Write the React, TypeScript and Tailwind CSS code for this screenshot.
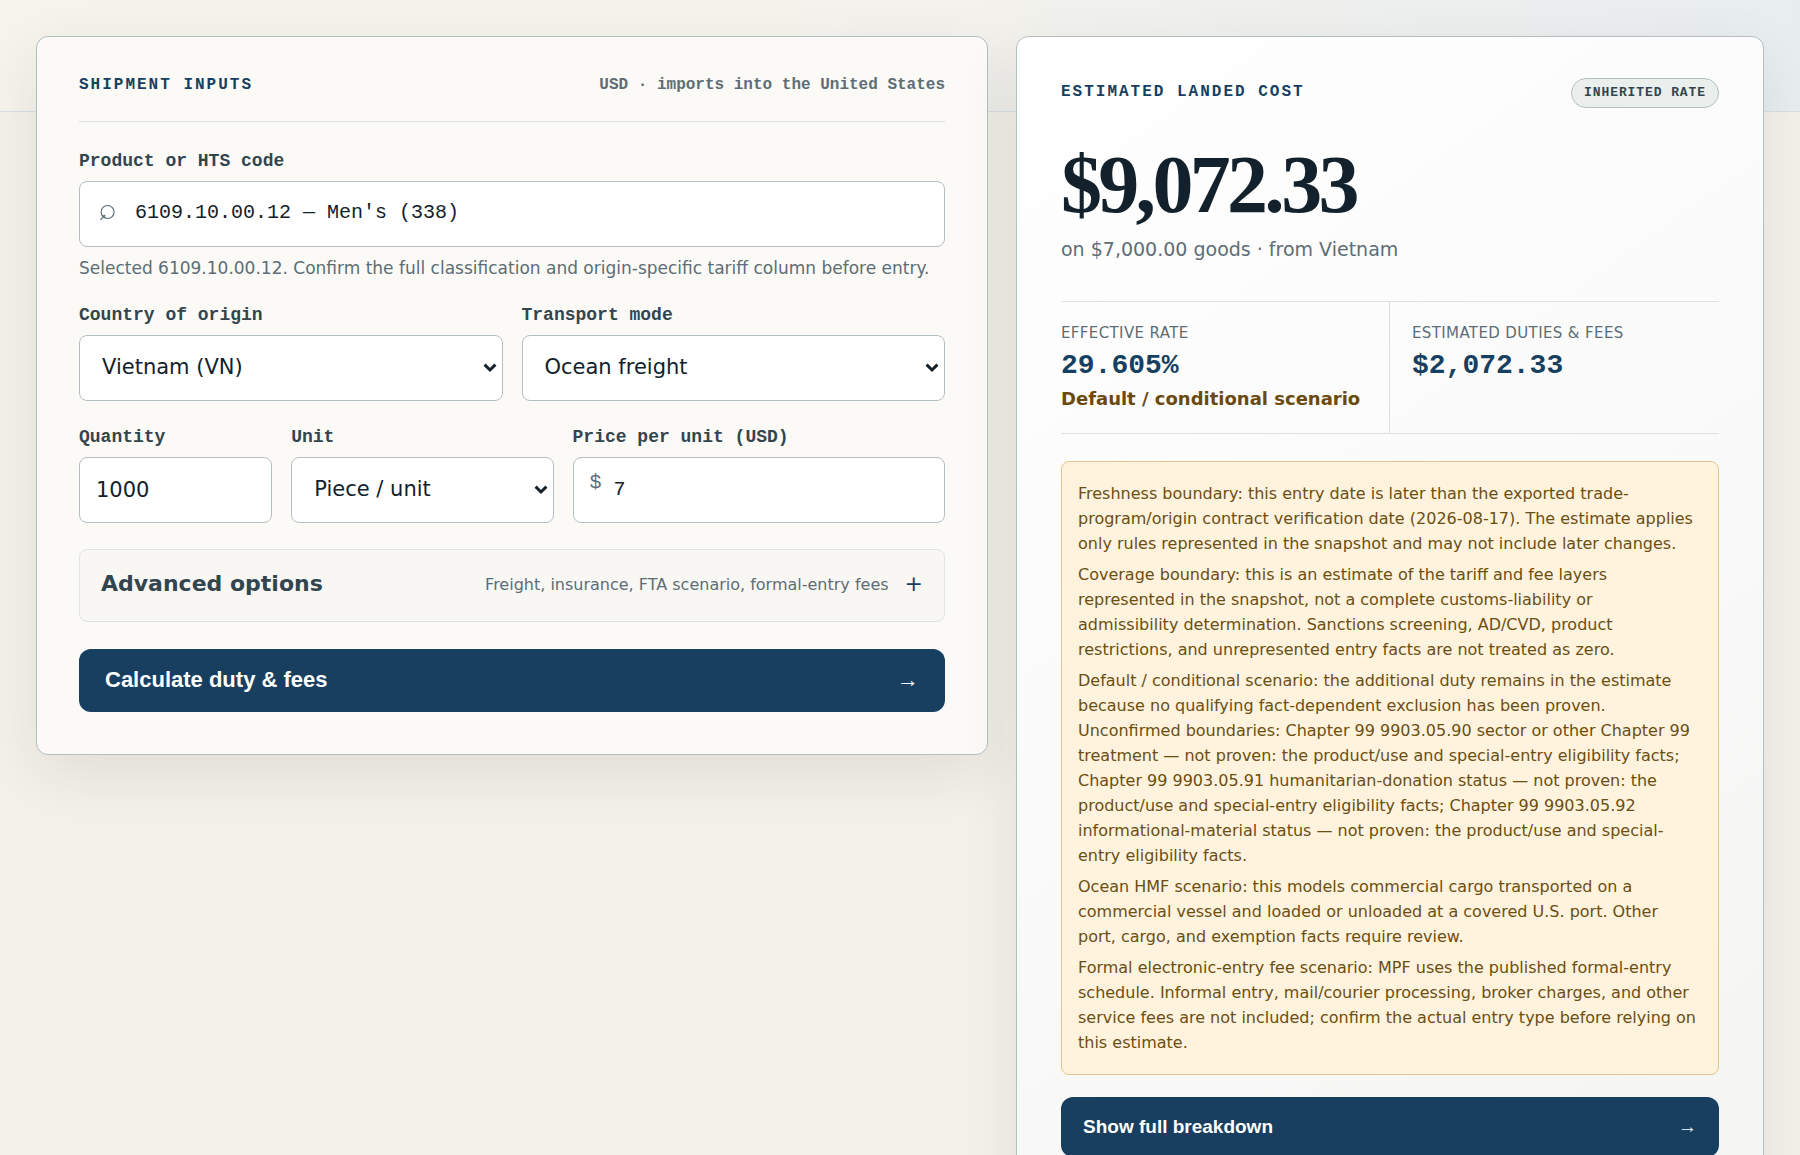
import { useState } from 'react'

const NOTES = [
  'Freshness boundary: this entry date is later than the exported trade-program/origin contract verification date (2026-08-17). The estimate applies only rules represented in the snapshot and may not include later changes.',
  'Coverage boundary: this is an estimate of the tariff and fee layers represented in the snapshot, not a complete customs-liability or admissibility\u00a0determination. Sanctions screening, AD/CVD, product restrictions, and unrepresented entry facts are not treated as zero.',
]

const CONDITIONAL = 'Default / conditional scenario: the additional duty remains in the estimate because no qualifying fact-dependent exclusion has been proven.'
const UNCONFIRMED =
  'Unconfirmed boundaries: Chapter 99 9903.05.90 sector or other Chapter 99 treatment — not proven: the product/use and special-entry eligibility facts; Chapter 99 9903.05.91 humanitarian-donation status — not proven: the product/use and special-entry eligibility facts; Chapter 99 9903.05.92 informational-material status — not proven: the product/use and special-entry eligibility facts.'

const SCENARIOS = [
  'Ocean HMF scenario: this models commercial cargo transported on a commercial vessel and loaded or unloaded at a covered U.S. port. Other port,\u00a0cargo, and exemption facts require review.',
  'Formal electronic-entry fee scenario: MPF uses the published formal-entry schedule. Informal entry, mail/courier processing, broker charges, and other service fees are not included; confirm the actual entry type before relying on this estimate.',
]

const mono = "font-['Liberation_Mono',monospace]"
const labelClass = `block text-[18px] leading-[22px] font-bold text-[#32454f] ${mono}`
const fieldClass = 'block w-full h-[66px] rounded-lg border border-[#b3bfc1] bg-white text-[21px] text-[#12212b]'

function SelectField({ id, label, value }: { id: string; label: string; value: string }) {
  return (
    <div className="flex flex-col gap-[9px]">
      <label htmlFor={id} className={labelClass}>{label}</label>
      <div className="relative">
        <select id={id} className={`${fieldClass} appearance-none pl-[22px]`}>
          <option>{value}</option>
        </select>
        <svg viewBox="0 0 14 10" className="pointer-events-none absolute top-7 right-1.5 h-[10px] w-[14px]" aria-hidden="true">
          <path d="M1.6 1.6 7 7l5.400-5.400" fill="none" stroke="#12212b" strokeWidth="3" />
        </svg>
      </div>
    </div>
  )
}

function ShipmentForm() {
  const [query, setQuery] = useState("6109.10.00.12 — Men's (338)")
  const [quantity, setQuantity] = useState('1000')
  const [price, setPrice] = useState('7')

  return (
    <form
      onSubmit={(e) => e.preventDefault()}
      className="rounded-xl border border-[#b3bfc1] bg-[#fbfaf6] px-[42px] pt-[37px] pb-[42px] shadow-[0_20px_60px_rgba(18,33,43,0.09)]"
    >
      <div className={`flex items-center justify-between border-b border-[#dce2e3] pb-[25px] text-[16px] leading-[22px] font-bold ${mono}`}>
        <h2 className="tracking-[2px] text-[#173f5f]">SHIPMENT INPUTS</h2>
        <span className="text-[#5d6d76]">USD · imports into the United States</span>
      </div>

      <div className="mt-7 flex flex-col gap-[9px]">
        <label htmlFor="product" className={labelClass}>Product or HTS code</label>
        <div className="flex h-[66px] gap-[18px] rounded-lg border border-[#b3bfc1] bg-white pl-[19px]">
          <svg viewBox="0 0 18 18" className="mt-[22px] h-[18px] w-[18px]" fill="none" stroke="#5d6d76" strokeWidth="1.2" aria-hidden="true">
            <circle cx="8.600" cy="8" r="6.500" />
            <path d="M1.400 15.800 6 11M3.600 11.400l2.900 2.400" />
          </svg>
          <input
            id="product"
            value={query}
            onChange={(e) => setQuery(e.target.value)}
            className={`h-[60px] min-w-0 flex-1 bg-transparent text-[20px] text-[#12212b] outline-none ${mono}`}
          />
        </div>
        <p className="text-[17px] leading-6 text-[#5d6d76]">
          Selected 6109.10.00.12. Confirm the full classification and origin-specific tariff column before entry.
        </p>
      </div>

      <div className="mt-6 grid grid-cols-2 gap-[19px]">
        <SelectField id="country" label="Country of origin" value="Vietnam (VN)" />
        <SelectField id="mode" label="Transport mode" value="Ocean freight" />
      </div>

      <div className="mt-[25px] grid grid-cols-[193fr_262fr_372fr] gap-[19px]">
        <div className="flex flex-col gap-[9px]">
          <label htmlFor="quantity" className={labelClass}>Quantity</label>
          <input id="quantity" value={quantity} onChange={(e) => setQuantity(e.target.value)} className={`${fieldClass} px-4`} />
        </div>
        <SelectField id="unit" label="Unit" value="Piece / unit" />
        <div className="flex flex-col gap-[9px]">
          <label htmlFor="price" className={labelClass}>Price per unit (USD)</label>
          <div className={`flex h-[66px] rounded-lg border border-[#b3bfc1] bg-white text-[20px] ${mono}`}>
            <span aria-hidden="true" className="w-[40px] pt-3 pl-4 leading-[26px] text-[#5d6d76]">$</span>
            <input
              id="price"
              value={price}
              onChange={(e) => setPrice(e.target.value)}
              className="min-w-0 flex-1 bg-transparent text-[#12212b] outline-none"
            />
          </div>
        </div>
      </div>

      <button type="button" className="mt-[26px] flex h-[73px] w-full items-center justify-between rounded-lg border border-[#dfe5e6] bg-[#f8f7f4] px-[21px] pb-1">
        <span className="text-[22px] font-bold text-[#32454f]">Advanced options</span>
        <span className="flex items-center gap-4 text-[#5d6d76]">
          <span className="pt-0.5 text-[16px]">Freight, insurance, FTA scenario, formal-entry fees</span>
          <span className="text-[22px] leading-6 text-[#173f5f]">+</span>
        </span>
      </button>

      <button
        type="submit"
        className="mt-[27px] flex h-[63px] w-full items-center justify-between rounded-xl bg-[#183f5f] px-[26px] pb-0.5 font-['Liberation_Sans',sans-serif] text-[22px] font-bold text-white"
      >
        <span>Calculate duty &amp; fees</span>
        <span aria-hidden="true">→</span>
      </button>
    </form>
  )
}

function LandedCost() {
  return (
    <section className="rounded-xl border border-[#b3bfc1] bg-linear-145 from-white to-[#f4f5f3] px-11 pt-[41px] pb-11 shadow-[0_20px_60px_rgba(18,33,43,0.09)]">
      <div className={`flex items-start justify-between font-bold ${mono}`}>
        <h2 className="pt-[3px] text-[16px] leading-[22px] tracking-[2px] text-[#173f5f]">ESTIMATED LANDED COST</h2>
        <span className="rounded-full border border-[#b3bfc1] bg-[#eaefee] px-3 text-[13px] leading-7 tracking-[0.07em] text-[#32454f]">
          INHERITED RATE
        </span>
      </div>

      <p className="mt-9 font-['Liberation_Serif',serif] text-[82px] leading-[82px] font-bold tracking-[-0.045em] text-[#12212b]">$9,072.33</p>
      <p className="mt-[9px] text-[19px] leading-7 text-[#5d6d76]">on $7,000.00 goods · from Vietnam</p>

      <dl className="mt-[38px] grid grid-cols-2 border-y border-[#dce2e3]">
        <div className="border-r border-[#dce2e3] py-[21px]">
          <dt className="text-[15px] leading-5 tracking-wide text-[#5d6d76]">EFFECTIVE RATE</dt>
          <dd className={`mt-[5px] text-[28px] leading-9 font-bold text-[#173f5f] ${mono}`}>29.605%</dd>
          <dd className="mt-0.5 text-[18px] leading-[26px] font-bold whitespace-nowrap text-[#6b4a10]">Default / conditional scenario</dd>
        </div>
        <div className="py-[21px] pl-[22px]">
          <dt className="text-[15px] leading-5 tracking-wide text-[#5d6d76]">ESTIMATED DUTIES &amp; FEES</dt>
          <dd className={`mt-[5px] text-[28px] leading-9 font-bold text-[#173f5f] ${mono}`}>$2,072.33</dd>
        </div>
      </dl>

      <div className="mt-[27px] flex flex-col gap-1.5 rounded-lg border border-[#e3c68d] bg-[#fff3dd] px-4 py-[19px] text-[16px] leading-[25px] text-[#6b4e12]">
        {NOTES.map((note) => (
          <p key={note}>{note}</p>
        ))}
        <div>
          <p>{CONDITIONAL}</p>
          <p>{UNCONFIRMED}</p>
        </div>
        {SCENARIOS.map((note) => (
          <p key={note}>{note}</p>
        ))}
      </div>

      <button
        type="button"
        className="mt-[22px] flex h-[60px] w-full items-center justify-between rounded-xl bg-[#183f5f] px-[22px] font-['Liberation_Sans',sans-serif] text-[19px] font-bold text-white"
      >
        <span>Show full breakdown</span>
        <span aria-hidden="true">→</span>
      </button>
    </section>
  )
}

export default function App() {
  return (
    <div className="min-h-screen bg-[#f4f1e9] font-['DejaVu_Sans',sans-serif]">
      <div className="h-28 border-b border-[#d8e0e3] bg-linear-to-r from-[#f6f3ec] from-40% to-[#e8edef]" />
      <main className="-mt-19 grid grid-cols-[14fr_11fr] items-start gap-7 px-9 pb-9">
        <ShipmentForm />
        <LandedCost />
      </main>
    </div>
  )
}
